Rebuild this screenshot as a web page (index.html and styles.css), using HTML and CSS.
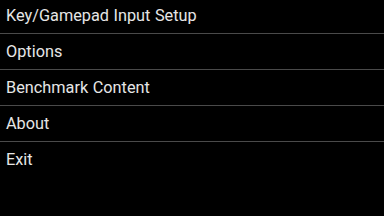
FILE: index.html
```html
<!DOCTYPE html>
<html lang="en">
<head>
    <meta charset="UTF-8">
    <meta name="viewport" content="width=device-width, initial-scale=1.0">
    <title>Menu</title>
    <link rel="stylesheet" href="styles.css">
</head>
<body>

<!-- Main menu list -->
<ul class="menu">
    <li class="menu-item">Key/Gamepad Input Setup</li>
    <li class="menu-item">Options</li>
    <li class="menu-item">Benchmark Content</li>
    <li class="menu-item">About</li>
    <li class="menu-item">Exit</li>
</ul>

</body>
</html>
```

FILE: styles.css
```css
body {
    font-family: Roboto, "Liberation Sans", sans-serif;
    margin: 0;
    padding: 0;
    background-color: #000;
    color: #e6e6e6;
}
.menu {
    list-style: none;
    margin: -2px 0 0 0;
    padding: 0;
}
.menu-item {
    display: flex;
    align-items: center;
    height: 35px;
    padding-left: 6px;
    font-size: 16.3px;
    word-spacing: 0.5px;
    border-bottom: 1px solid #4a4a4a;
}
.menu-item:last-child {
    border-bottom: none;
}
```
